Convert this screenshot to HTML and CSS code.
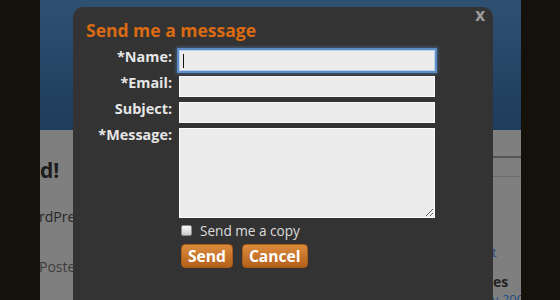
FILE: index.html
```html
<!DOCTYPE html>
<html lang="en">
<head>
  <meta charset="UTF-8" />
  <title>Send me a message</title>
  <link rel="stylesheet" href="styles.css">
</head>
<body>

  <div class="page">
    <div class="masthead"></div>
    <div class="content">
      <div class="main-col">
        <h2 class="post-title">d!</h2>
        <p class="post-text">rdPress</p>
        <p class="post-meta">Posted</p>
      </div>
      <div class="side-col">
        <div class="tabs"></div>
        <p class="side-link">t</p>
        <h3 class="side-head">es</h3>
        <p class="side-link">y 2009</p>
      </div>
    </div>
  </div>

  <div class="modal">
    <span class="close-btn">x</span>
    <h1 class="modal-title">Send me a message</h1>
    <form class="contact-form">
      <label class="field-label" for="cName">*Name:</label>
      <span class="focus-wrap"><input type="text" id="cName" class="field focused"></span>
      <label class="field-label" for="cEmail">*Email:</label>
      <input type="text" id="cEmail" class="field">
      <label class="field-label" for="cSubject">Subject:</label>
      <input type="text" id="cSubject" class="field">
      <label class="field-label" for="cMessage">*Message:</label>
      <textarea id="cMessage" class="field message"></textarea>
    </form>
    <div class="copy-row">
      <input type="checkbox" id="cCopy" class="check">
      <label for="cCopy">Send me a copy</label>
    </div>
    <div class="actions">
      <button class="btn">Send</button>
      <button class="btn">Cancel</button>
    </div>
  </div>

</body>
</html>
```

FILE: styles.css
```css
:root {
  --dark: #14100a;
  --modal: #333333;
  --orange: #db6a12;
  --label: #e6e6e6;
  --field: #ececec;
}
* {
  margin: 0;
  padding: 0;
  box-sizing: border-box;
}
body {
  font-family: 'Open Sans', 'DejaVu Sans', sans-serif;
  background-color: var(--dark);
  height: 300px;
  overflow: hidden;
  position: relative;
}
.page {
  width: 481px;
  margin-left: 40px;
}
.masthead {
  height: 130px;
  background: linear-gradient(180deg, #2e5172, #1e3c5b);
}
.content {
  height: 170px;
  background-color: #7f7f7f;
  display: flex;
  justify-content: space-between;
}
.main-col {
  width: 33px;
  overflow: hidden;
  white-space: nowrap;
}
.post-title {
  font-size: 21px;
  line-height: 24px;
  margin-top: 28px;
  color: #1c1c1c;
}
.post-text {
  font-size: 14px;
  line-height: 18px;
  margin-top: 26px;
  margin-left: -1px;
  color: #262626;
}
.post-meta {
  font-size: 14px;
  line-height: 18px;
  margin-top: 32px;
  margin-left: -1px;
  color: #3c3c3c;
}
.side-col {
  width: 28px;
  overflow: hidden;
  white-space: nowrap;
}
.tabs {
  margin-top: 26px;
  height: 21px;
  border-top: 2px solid #545454;
  border-bottom: 1px solid #6b6b6b;
}
.side-link {
  font-size: 13px;
  line-height: 16px;
  color: #1f4f88;
  margin-left: -1px;
  margin-top: 67px;
}
.side-head {
  font-size: 14px;
  line-height: 18px;
  margin-top: 13px;
  color: #222;
}
.side-head + .side-link {
  margin-top: 0;
}

.modal {
  position: absolute;
  left: 73px;
  top: 7px;
  width: 420px;
  height: 293px;
  background: var(--modal);
  border-radius: 10px 10px 0 0;
  padding: 12px 13px;
}
.close-btn {
  position: absolute;
  top: -1px;
  right: 8px;
  font-size: 17px;
  line-height: 17px;
  font-weight: bold;
  color: #9c9c9c;
}
.modal-title {
  font-size: 17.5px;
  line-height: 22px;
  color: var(--orange);
}
.contact-form {
  margin-top: 9px;
  display: grid;
  grid-template-columns: 86px 256px;
  grid-template-rows: 21px 21px 21px 90px;
  column-gap: 7px;
  row-gap: 5px;
}
.field-label {
  text-align: right;
  font-size: 14.4px;
  font-weight: bold;
  line-height: 14px;
  color: var(--label);
}
.field {
  display: block;
  width: 256px;
  height: 21px;
  background: var(--field);
  border: 1px solid #fafafa;
  font-family: inherit;
  font-size: 13px;
  outline: none;
}
.field.message {
  height: 90px;
  resize: both;
}
.focus-wrap {
  position: relative;
  display: block;
}
.field.focused {
  border-color: #bcd2ea;
  box-shadow: 0 0 0 2px #5d8ec7, 0 0 3px 3px rgba(90, 140, 200, 0.45);
}
.focus-wrap::after {
  content: "";
  position: absolute;
  left: 4px;
  top: 4px;
  width: 1px;
  height: 14px;
  background: #111;
}
.copy-row {
  margin-top: 3px;
  margin-left: 95px;
  display: flex;
  align-items: center;
  gap: 8px;
  height: 18px;
  font-size: 13.6px;
  color: #dcdcdc;
}
.check {
  appearance: none;
  width: 11px;
  height: 11px;
  border: 1px solid #8c8c8c;
  border-radius: 2px;
  background: linear-gradient(180deg, #fbfbfb, #c9c9c9);
}
.actions {
  margin-top: 5px;
  margin-left: 95px;
  display: flex;
  gap: 9px;
}
.btn {
  height: 24px;
  padding: 0 6px;
  border: 1px solid #a85a18;
  border-radius: 4px;
  background: linear-gradient(180deg, #dc8b3d, #b4601a);
  color: #fff;
  font-family: inherit;
  font-size: 15.6px;
  font-weight: bold;
  line-height: 22px;
}
```
